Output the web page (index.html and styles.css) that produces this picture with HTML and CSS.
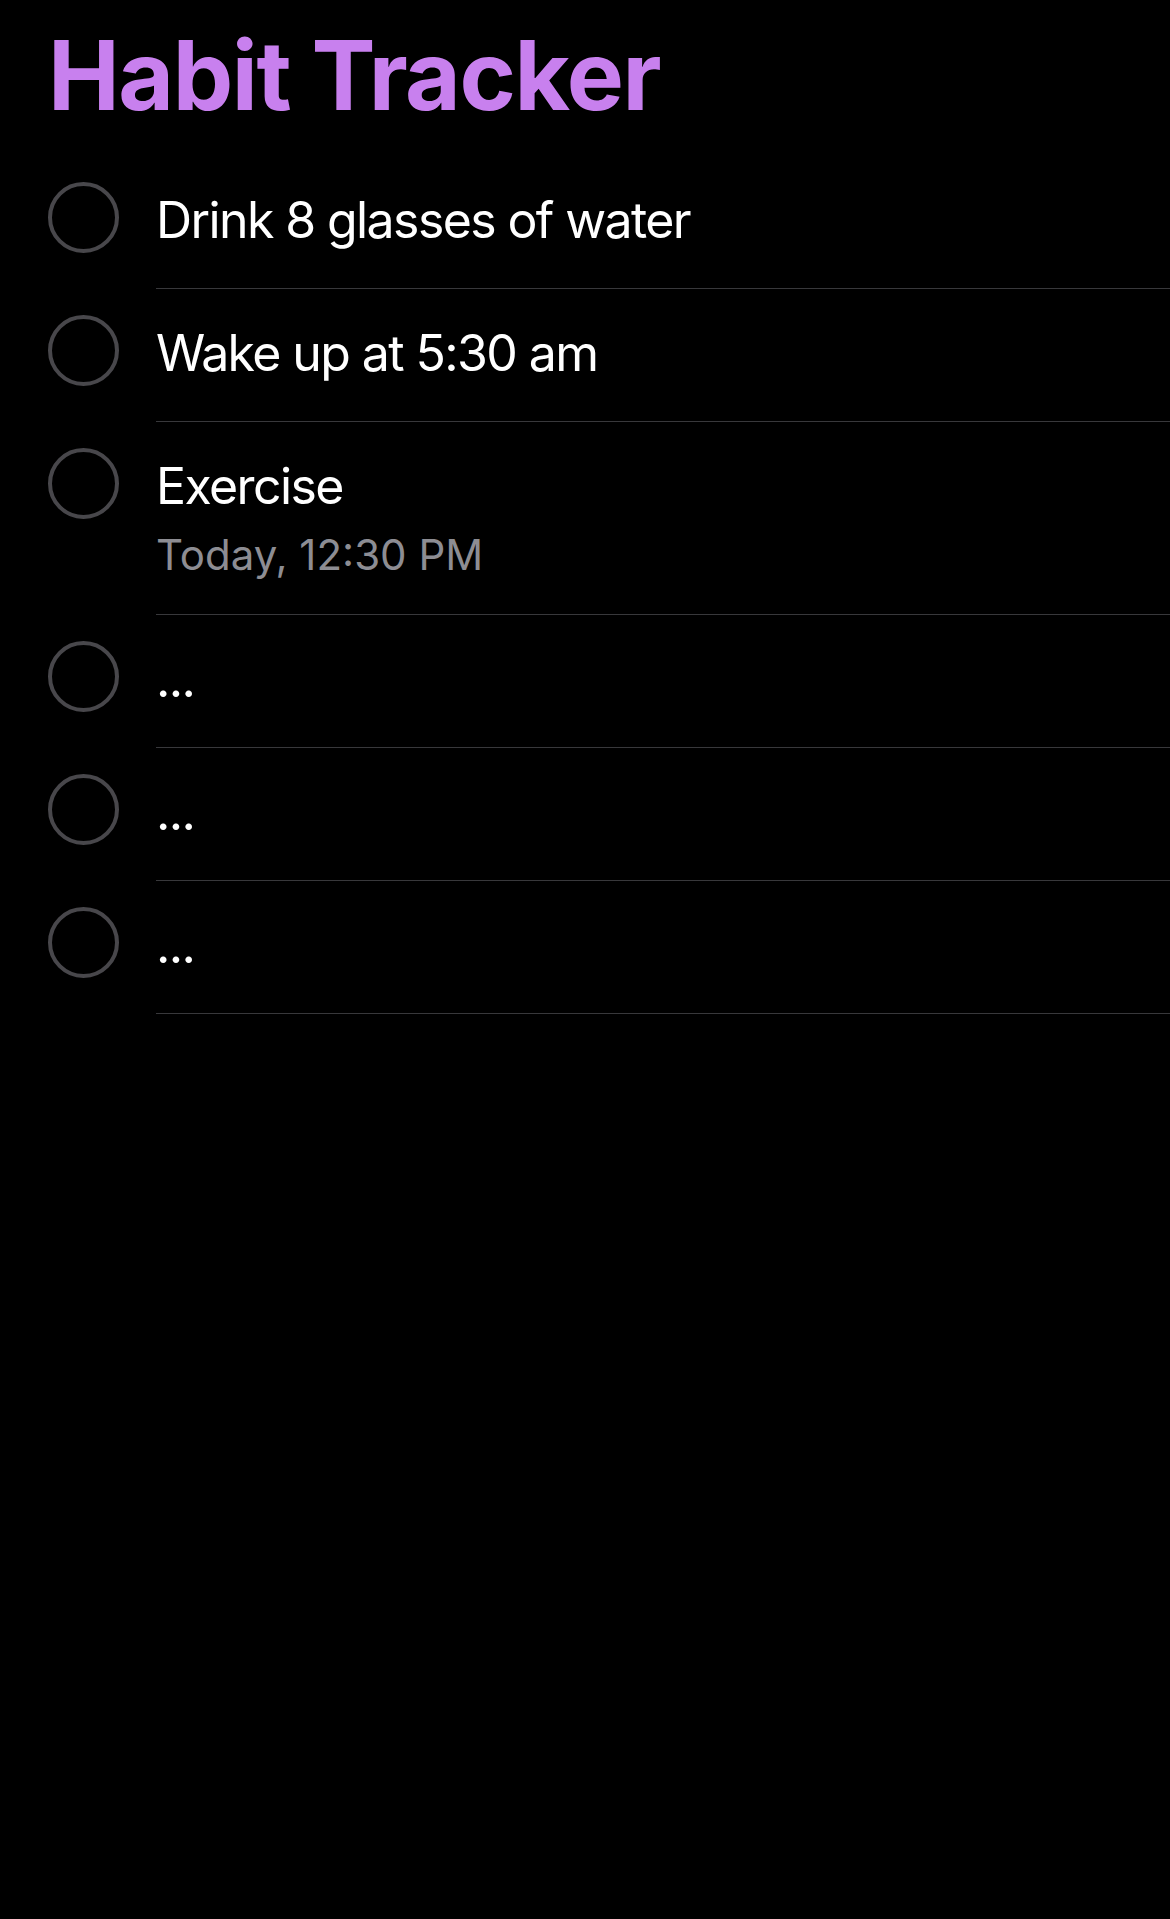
FILE: index.html
```html
<!DOCTYPE html>
<html lang="en">
<head>
<meta charset="utf-8">
<title>Habit Tracker</title>
<link rel="stylesheet" href="styles.css">
</head>
<body>
<main class="screen">
  <h1 class="title">Habit Tracker</h1>
  <ul class="list">
    <li class="row">
      <span class="check"></span>
      <div class="content"><div class="label">Drink 8 glasses of water</div></div>
    </li>
    <li class="row">
      <span class="check"></span>
      <div class="content"><div class="label">Wake up at 5:30 am</div></div>
    </li>
    <li class="row">
      <span class="check"></span>
      <div class="content">
        <div class="label">Exercise</div>
        <div class="sub">Today, 12:30 PM</div>
      </div>
    </li>
    <li class="row">
      <span class="check"></span>
      <div class="content"><div class="label">...</div></div>
    </li>
    <li class="row">
      <span class="check"></span>
      <div class="content"><div class="label">...</div></div>
    </li>
    <li class="row">
      <span class="check"></span>
      <div class="content"><div class="label">...</div></div>
    </li>
  </ul>
</main>
</body>
</html>
```

FILE: styles.css
```css
html, body {
  margin: 0;
  padding: 0;
  background: #000;
}
body {
  font-family: Inter, "Noto Sans", sans-serif;
  color: #fff;
  min-height: 1919px;
}
.screen {
  padding-left: 48px;
}
.title {
  margin: 0;
  padding-top: 20px;
  height: 156px;
  box-sizing: border-box;
  font-size: 96px;
  line-height: 110px;
  font-weight: 700;
  color: #c880ee;
  letter-spacing: -1.4px;
}
.list {
  list-style: none;
  margin: 0;
  padding: 0;
}
.row {
  display: flex;
  align-items: flex-start;
}
.check {
  flex: none;
  width: 71px;
  height: 71px;
  box-sizing: border-box;
  border: 4px solid #48474b;
  border-radius: 50%;
  margin-top: 26px;
  margin-right: 37px;
}
.content {
  flex: 1;
  padding-top: 33px;
  padding-bottom: 37px;
  border-bottom: 1px solid #38383b;
}
.label {
  font-size: 50px;
  line-height: 62px;
  letter-spacing: -1.6px;
}
.sub {
  margin-top: 16px;
  font-size: 42px;
  line-height: 44px;
  color: #8d8d93;
}
```
